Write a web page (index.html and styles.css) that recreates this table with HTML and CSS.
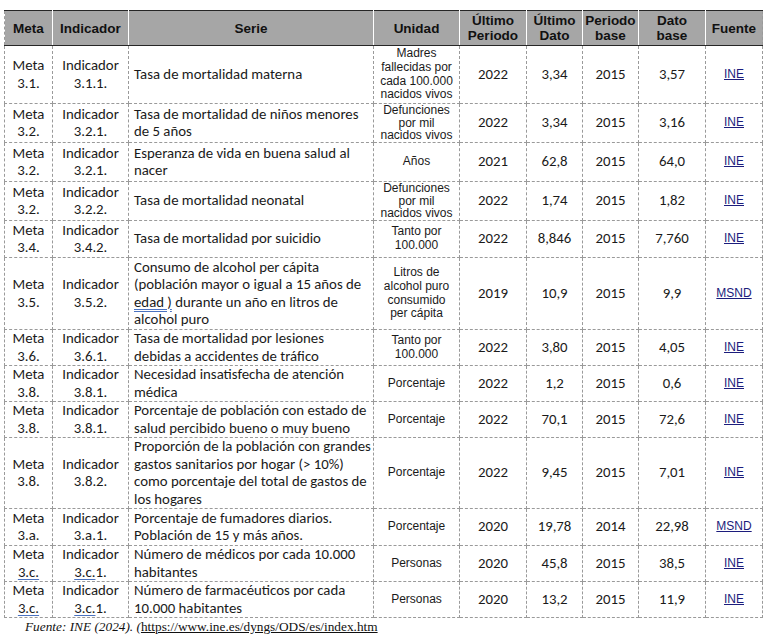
FILE: index.html
```html
<!DOCTYPE html>
<html lang="es">
<head>
<meta charset="utf-8">
<title>Indicadores ODS 3</title>
<link rel="stylesheet" href="styles.css">
</head>
<body>
<table class="ods">
  <colgroup>
    <col class="c-meta"><col class="c-ind"><col class="c-serie"><col class="c-unidad">
    <col class="c-up"><col class="c-ud"><col class="c-pb"><col class="c-db"><col class="c-fuente">
  </colgroup>
  <thead>
    <tr>
      <th>Meta</th><th>Indicador</th><th>Serie</th><th>Unidad</th>
      <th>Último<br>Periodo</th><th>Último<br>Dato</th><th>Periodo<br>base</th><th>Dato<br>base</th><th>Fuente</th>
    </tr>
  </thead>
  <tbody>
    <tr class="h58">
      <td class="cen">Meta<br>3.1.</td><td class="cen">Indicador<br>3.1.1.</td>
      <td class="serie">Tasa de mortalidad materna</td>
      <td class="unidad">Madres<br>fallecidas por<br>cada 100.000<br>nacidos vivos</td>
      <td class="num">2022</td><td class="num">3,34</td><td class="num">2015</td><td class="num">3,57</td>
      <td class="fuente"><a href="#">INE</a></td>
    </tr>
    <tr class="h39">
      <td class="cen">Meta<br>3.2.</td><td class="cen">Indicador<br>3.2.1.</td>
      <td class="serie">Tasa de mortalidad de niños menores<br>de 5 años</td>
      <td class="unidad tight">Defunciones<br>por mil<br>nacidos vivos</td>
      <td class="num">2022</td><td class="num">3,34</td><td class="num">2015</td><td class="num">3,16</td>
      <td class="fuente"><a href="#">INE</a></td>
    </tr>
    <tr class="h39">
      <td class="cen">Meta<br>3.2.</td><td class="cen">Indicador<br>3.2.1.</td>
      <td class="serie">Esperanza de vida en buena salud al<br>nacer</td>
      <td class="unidad">Años</td>
      <td class="num">2021</td><td class="num">62,8</td><td class="num">2015</td><td class="num">64,0</td>
      <td class="fuente"><a href="#">INE</a></td>
    </tr>
    <tr class="h39">
      <td class="cen">Meta<br>3.2.</td><td class="cen">Indicador<br>3.2.2.</td>
      <td class="serie">Tasa de mortalidad neonatal</td>
      <td class="unidad tight">Defunciones<br>por mil<br>nacidos vivos</td>
      <td class="num">2022</td><td class="num">1,74</td><td class="num">2015</td><td class="num">1,82</td>
      <td class="fuente"><a href="#">INE</a></td>
    </tr>
    <tr class="h37">
      <td class="cen">Meta<br>3.4.</td><td class="cen">Indicador<br>3.4.2.</td>
      <td class="serie">Tasa de mortalidad por suicidio</td>
      <td class="unidad">Tanto por<br>100.000</td>
      <td class="num">2022</td><td class="num">8,846</td><td class="num">2015</td><td class="num">7,760</td>
      <td class="fuente"><a href="#">INE</a></td>
    </tr>
    <tr class="h72">
      <td class="cen">Meta<br>3.5.</td><td class="cen">Indicador<br>3.5.2.</td>
      <td class="serie">Consumo de alcohol per cápita<br>(población mayor o igual a 15 años de<br><span class="gram">edad )</span> durante un año en litros de<br>alcohol puro</td>
      <td class="unidad">Litros de<br>alcohol puro<br>consumido<br>per cápita</td>
      <td class="num">2019</td><td class="num">10,9</td><td class="num">2015</td><td class="num">9,9</td>
      <td class="fuente"><a href="#">MSND</a></td>
    </tr>
    <tr class="h36">
      <td class="cen">Meta<br>3.6.</td><td class="cen">Indicador<br>3.6.1.</td>
      <td class="serie">Tasa de mortalidad por lesiones<br>debidas a accidentes de tráfico</td>
      <td class="unidad">Tanto por<br>100.000</td>
      <td class="num">2022</td><td class="num">3,80</td><td class="num">2015</td><td class="num">4,05</td>
      <td class="fuente"><a href="#">INE</a></td>
    </tr>
    <tr class="h35">
      <td class="cen">Meta<br>3.8.</td><td class="cen">Indicador<br>3.8.1.</td>
      <td class="serie">Necesidad insatisfecha de atención<br>médica</td>
      <td class="unidad">Porcentaje</td>
      <td class="num">2022</td><td class="num">1,2</td><td class="num">2015</td><td class="num">0,6</td>
      <td class="fuente"><a href="#">INE</a></td>
    </tr>
    <tr class="h36">
      <td class="cen">Meta<br>3.8.</td><td class="cen">Indicador<br>3.8.1.</td>
      <td class="serie">Porcentaje de población con estado de<br>salud percibido bueno o muy bueno</td>
      <td class="unidad">Porcentaje</td>
      <td class="num">2022</td><td class="num">70,1</td><td class="num">2015</td><td class="num">72,6</td>
      <td class="fuente"><a href="#">INE</a></td>
    </tr>
    <tr class="h69">
      <td class="cen">Meta<br>3.8.</td><td class="cen">Indicador<br>3.8.2.</td>
      <td class="serie">Proporción de la población con grandes<br>gastos sanitarios por hogar (&gt; 10%)<br>como porcentaje del total de gastos de<br>los hogares</td>
      <td class="unidad">Porcentaje</td>
      <td class="num">2022</td><td class="num">9,45</td><td class="num">2015</td><td class="num">7,01</td>
      <td class="fuente"><a href="#">INE</a></td>
    </tr>
    <tr class="h37">
      <td class="cen">Meta<br>3.a.</td><td class="cen">Indicador<br>3.a.1.</td>
      <td class="serie">Porcentaje de fumadores diarios.<br>Población de 15 y más años.</td>
      <td class="unidad">Porcentaje</td>
      <td class="num">2020</td><td class="num">19,78</td><td class="num">2014</td><td class="num">22,98</td>
      <td class="fuente"><a href="#">MSND</a></td>
    </tr>
    <tr class="h36">
      <td class="cen">Meta<br><span class="gram">3.c.</span></td><td class="cen">Indicador<br><span class="gram">3.c.</span>1.</td>
      <td class="serie">Número de médicos por cada 10.000<br>habitantes</td>
      <td class="unidad">Personas</td>
      <td class="num">2020</td><td class="num">45,8</td><td class="num">2015</td><td class="num">38,5</td>
      <td class="fuente"><a href="#">INE</a></td>
    </tr>
    <tr class="h36">
      <td class="cen">Meta<br><span class="gram">3.c.</span></td><td class="cen">Indicador<br><span class="gram">3.c.</span>1.</td>
      <td class="serie">Número de farmacéuticos por cada<br>10.000 habitantes</td>
      <td class="unidad">Personas</td>
      <td class="num">2020</td><td class="num">13,2</td><td class="num">2015</td><td class="num">11,9</td>
      <td class="fuente"><a href="#">INE</a></td>
    </tr>
  </tbody>
</table>
<p class="source"><em>Fuente: INE (2024). (</em><a href="#">https://www.ine.es/dyngs/ODS/es/index.htm</a></p>
</body>
</html>
```
FILE: styles.css
```css
html, body {
  margin: 0;
  padding: 0;
  background: #ffffff;
}

body {
  padding: 10px 0 0 4px;
  color: #1a1a1a;
  font-family: Carlito, Lato, "Liberation Sans", sans-serif;
}

.ods {
  border-collapse: collapse;
  table-layout: fixed;
  width: 758px;
}

.c-meta { width: 48px; }
.c-ind { width: 76px; }
.c-serie { width: 245px; }
.c-unidad { width: 86px; }
.c-up { width: 67px; }
.c-ud { width: 56px; }
.c-pb { width: 56px; }
.c-db { width: 67px; }
.c-fuente { width: 57px; }

.ods th {
  height: 34px;
  padding: 0 2px;
  background: #a6a6a6;
  color: #111111;
  font-family: "Liberation Sans", Arial, sans-serif;
  font-weight: bold;
  font-size: 13.5px;
  line-height: 15px;
  text-align: center;
  vertical-align: middle;
  border-top: 1px solid #262626;
  border-bottom: 1px solid #262626;
  border-left: 1px solid #ffffff;
  border-right: 1px solid #ffffff;
}

.ods th:first-child { border-left: 1px dashed #9a9a9a; }
.ods th:last-child { border-right: 1px dashed #9a9a9a; }

.ods td {
  padding: 0 2px;
  border: 1px dashed #9a9a9a;
  vertical-align: middle;
  font-size: 14.8px;
  line-height: 17.5px;
  white-space: nowrap;
  overflow: hidden;
}

.ods .cen { text-align: center; }

.ods .serie {
  text-align: left;
  padding-left: 5px;
}

.ods .unidad {
  font-family: "Liberation Sans", Arial, sans-serif;
  font-size: 12px;
  line-height: 13.6px;
  text-align: center;
}

.ods .unidad.tight { line-height: 12.6px; }

.ods .num { text-align: center; }

.ods .fuente {
  font-family: "Liberation Sans", Arial, sans-serif;
  font-size: 12px;
  text-align: center;
}

.ods a {
  color: #1c1c7c;
  text-decoration: underline;
}

.gram {
  text-decoration: underline double #4a72c0;
  text-underline-offset: 2px;
}

.h35 { height: 35px; }
.h36 { height: 36px; }
.h37 { height: 37px; }
.h39 { height: 39px; }
.h58 { height: 58px; }
.h69 { height: 69px; }
.h72 { height: 72px; }

.source {
  margin: 1px 0 0 21px;
  font-family: "Liberation Serif", "Times New Roman", serif;
  font-size: 13.3px;
  line-height: 15px;
  color: #111111;
}

.source em { font-style: italic; }

.source a {
  color: #111111;
  text-decoration: underline;
}
```
